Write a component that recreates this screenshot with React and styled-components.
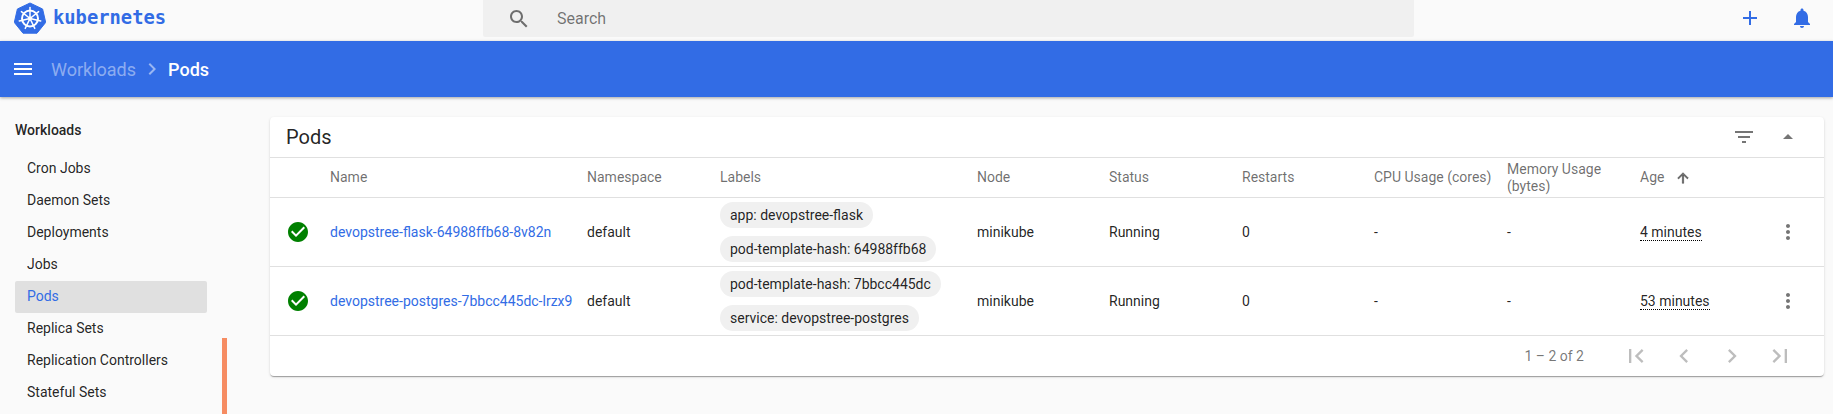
import React from "react";
import styled, { createGlobalStyle } from "styled-components";

const Global = createGlobalStyle`
  html, body { margin: 0; padding: 0; height: 100%; overflow: hidden; background: #fafafa; }
  body { font-family: Roboto, "Liberation Sans", sans-serif; font-size: 14px; color: rgba(0,0,0,.87); }
  * { box-sizing: border-box; }
`;

const P = {
  menu: "M3 18h18v-2H3v2zm0-5h18v-2H3v2zm0-7v2h18V6H3z",
  search: "M15.5 14h-.79l-.28-.27C15.41 12.59 16 11.11 16 9.5 16 5.91 13.09 3 9.5 3S3 5.91 3 9.5 5.91 16 9.5 16c1.61 0 3.09-.59 4.23-1.57l.27.28v.79l5 4.99L20.49 19l-4.99-5zm-6 0C7.01 14 5 11.99 5 9.5S7.01 5 9.5 5 14 7.01 14 9.5 11.99 14 9.5 14z",
  add: "M19 13h-6v6h-2v-6H5v-2h6V5h2v6h6v2z",
  bell: "M12 22c1.1 0 2-.9 2-2h-4c0 1.1.89 2 2 2zm6-6v-5c0-3.07-1.64-5.64-4.5-6.32V4c0-.83-.67-1.5-1.5-1.5s-1.5.67-1.5 1.5v.68C7.63 5.36 6 7.92 6 11v5l-2 2v1h16v-1l-2-2z",
  chevronRight: "M10 6L8.59 7.41 13.17 12l-4.58 4.59L10 18l6-6z",
  chevronLeft: "M15.41 7.41L14 6l-6 6 6 6 1.41-1.41L10.83 12z",
  first: "M18.41 16.59L13.82 12l4.59-4.59L17 6l-6 6 6 6zM6 6h2v12H6z",
  last: "M5.59 7.41L10.18 12l-4.59 4.59L7 18l6-6-6-6zM16 6h2v12h-2z",
  filter: "M10 18h4v-2h-4v2zM3 6v2h18V6H3zm3 7h12v-2H6v2z",
  dropUp: "M7 14l5-5 5 5z",
  up: "M4 12l1.41 1.41L11 7.83V20h2V7.83l5.58 5.59L20 12l-8-8-8 8z",
  check: "M12 2C6.48 2 2 6.48 2 12s4.48 10 10 10 10-4.48 10-10S17.52 2 12 2zm-2 15l-5-5 1.41-1.41L10 14.17l7.59-7.59L19 8l-9 9z",
  dots: "M12 8c1.1 0 2-.9 2-2s-.9-2-2-2-2 .9-2 2 .9 2 2 2zm0 2c-1.1 0-2 .9-2 2s.9 2 2 2 2-.9 2-2-.9-2-2-2zm0 6c-1.1 0-2 .9-2 2s.9 2 2 2 2-.9 2-2-.9-2-2-2z",
};

const IconSvg = styled.svg`
  display: block;
  flex: none;
  fill: ${(p) => p.$color || "rgba(0,0,0,.54)"};
  stroke: ${(p) => (p.$bold ? p.$color || "rgba(0,0,0,.54)" : "none")};
  stroke-width: ${(p) => (p.$bold ? 1 : 0)};
  paint-order: stroke;
`;
const Icon = ({ d, size = 24, color, bold }) => (
  <IconSvg viewBox="0 0 24 24" width={size} height={size} $color={color} $bold={bold}>
    <path d={d} />
  </IconSvg>
);

const Page = styled.div`
  height: 100vh;
  display: flex;
  flex-direction: column;
  overflow: hidden;
`;
const TopBar = styled.header`
  height: 41px;
  flex: none;
  display: flex;
  align-items: flex-start;
  background: #fafafa;
`;
const Brand = styled.div`
  width: 483px;
  flex: none;
  display: flex;
  align-items: center;
  gap: 7px;
  padding: 2px 0 0 14px;
`;
const BrandName = styled.span`
  font-family: "DejaVu Sans Mono", monospace;
  font-weight: 700;
  font-size: 18.8px;
  line-height: 30px;
  color: #326ce5;
`;
const SearchBox = styled.div`
  width: 931px;
  height: 37px;
  flex: none;
  display: flex;
  align-items: center;
  gap: 26px;
  padding: 0 0 0 24px;
  background: #f0f0f0;
  border-radius: 0 0 2px 2px;
`;
const SearchText = styled.span`
  font-size: 16px;
  color: rgba(0,0,0,.54);
`;
const TopActions = styled.div`
  margin-left: auto;
  display: flex;
  align-items: center;
  gap: 28px;
  padding: 6px 19px 0 0;
`;
const BlueBar = styled.div`
  height: 56px;
  flex: none;
  display: flex;
  align-items: center;
  padding-left: 11px;
  background: #326ce5;
  box-shadow: 0 1px 3px rgba(0,0,0,.35);
  position: relative;
  z-index: 1;
`;
const Crumbs = styled.nav`
  display: flex;
  align-items: center;
  margin-left: 16px;
  font-size: 18px;
  font-weight: 500;
`;
const CrumbLink = styled.span`
  font-weight: 400;
  color: rgba(255,255,255,.46);
`;
const CrumbCurrent = styled.span`
  color: #fff;
`;
const CrumbSep = styled.span`
  margin: 0 4px 0 4px;
`;
const Body = styled.div`
  flex: 1;
  min-height: 0;
  display: flex;
`;
const Sidebar = styled.aside`
  width: 222px;
  flex: none;
  padding: 24px 15px 0;
`;
const NavTitle = styled.div`
  height: 18px;
  line-height: 18px;
  margin-bottom: 14px;
  font-size: 14px;
  font-weight: 500;
`;
const NavItem = styled.div`
  height: 32px;
  line-height: 31px;
  padding-left: 12px;
  border-radius: 2px;
  font-size: 14px;
  color: ${(p) => (p.$active ? "#326ce5" : "rgba(0,0,0,.87)")};
  background: ${(p) => (p.$active ? "#e0e0e0" : "transparent")};
`;
const Thumb = styled.div`
  width: 5px;
  flex: none;
  margin-top: 241px;
  background: #f68c62;
`;
const Main = styled.main`
  flex: 1;
  min-width: 0;
  padding: 20px 9px 0 43px;
`;
const Card = styled.section`
  background: #fff;
  border-radius: 4px;
  box-shadow: 0 2px 1px -1px rgba(0,0,0,.2), 0 1px 1px rgba(0,0,0,.14), 0 1px 3px rgba(0,0,0,.12);
`;
const CardHead = styled.div`
  height: 41px;
  display: flex;
  align-items: center;
  padding: 0 24px 0 16px;
  border-bottom: 1px solid #e0e0e0;
`;
const CardTitle = styled.h2`
  margin: 0;
  font-size: 20px;
  font-weight: 400;
  line-height: 40px;
`;
const CardActions = styled.div`
  margin-left: auto;
  display: flex;
  align-items: center;
  gap: 20px;
`;
const columns = "60px 257px 133px 257px 132px 133px 132px 133px 133px 136px 24px";
const HeadRow = styled.div`
  display: grid;
  grid-template-columns: ${columns};
  height: 40px;
  align-items: center;
  border-bottom: 1px solid #e0e0e0;
`;
const HeadCell = styled.div`
  display: flex;
  align-items: center;
  gap: 11px;
  font-size: 14px;
  font-weight: 400;
  line-height: 17px;
  white-space: nowrap;
  color: rgba(0,0,0,.58);
  grid-column: ${(p) => p.$col || "auto"};
`;
const Row = styled.div`
  display: grid;
  grid-template-columns: ${columns};
  height: 69px;
  align-items: center;
  border-bottom: 1px solid #e0e0e0;
`;
const StatusCell = styled.div`
  padding-left: 16px;
`;
const PodLink = styled.a`
  color: #326ce5;
  white-space: nowrap;
`;
const Chips = styled.div`
  display: flex;
  flex-direction: column;
  align-items: flex-start;
  gap: 8px;
`;
const Chip = styled.span`
  height: 26px;
  line-height: 26px;
  padding: 0 10px;
  border-radius: 13px;
  background: #f0f0f0;
  white-space: nowrap;
`;
const Age = styled.span`
  border-bottom: 1px dotted #000;
  line-height: 15px;
  display: inline-block;
`;
const Footer = styled.div`
  height: 40px;
  display: flex;
  align-items: center;
  justify-content: flex-end;
  padding-right: 20px;
`;
const Range = styled.span`
  margin-right: 28px;
  font-size: 14px;
  color: rgba(0,0,0,.54);
`;
const PageButton = styled.span`
  width: 48px;
  display: flex;
  justify-content: center;
`;

const nav = ["Cron Jobs", "Daemon Sets", "Deployments", "Jobs", "Pods", "Replica Sets", "Replication Controllers", "Stateful Sets"];
const pods = [
  { name: "devopstree-flask-64988ffb68-8v82n", labels: ["app: devopstree-flask", "pod-template-hash: 64988ffb68"], age: "4 minutes" },
  { name: "devopstree-postgres-7bbcc445dc-lrzx9", labels: ["pod-template-hash: 7bbcc445dc", "service: devopstree-postgres"], age: "53 minutes" },
];
const heads = ["Namespace", "Labels", "Node", "Status", "Restarts", "CPU Usage (cores)"];

const Logo = () => (
  <svg width="32" height="32" viewBox="0 0 32 32">
    <path d="M16 1 L28.6 7 L31.7 20.4 L23 31.2 L9 31.2 L.3 20.4 L3.4 7 Z" fill="#326ce5" stroke="#326ce5" strokeLinejoin="round" strokeWidth="1" />
    <g stroke="#fff" fill="none" strokeLinecap="round">
      <circle cx="16" cy="16.5" r="8" strokeWidth="2" />
      <circle cx="16" cy="16.5" r="1.6" fill="#fff" strokeWidth="1" />
      <g strokeWidth="1.5">
        <path d="M16 16.5V5.5" />
        <path d="M16 16.5V5.5" transform="rotate(51.4 16 16.5)" />
        <path d="M16 16.5V5.5" transform="rotate(102.9 16 16.5)" />
        <path d="M16 16.5V5.5" transform="rotate(154.3 16 16.5)" />
        <path d="M16 16.5V5.5" transform="rotate(205.7 16 16.5)" />
        <path d="M16 16.5V5.5" transform="rotate(257.1 16 16.5)" />
        <path d="M16 16.5V5.5" transform="rotate(308.6 16 16.5)" />
      </g>
    </g>
  </svg>
);

export default function App() {
  return (
    <Page>
      <Global />
      <TopBar>
        <Brand>
          <Logo />
          <BrandName>kubernetes</BrandName>
        </Brand>
        <SearchBox>
          <Icon d={P.search} />
          <SearchText>Search</SearchText>
        </SearchBox>
        <TopActions>
          <Icon d={P.add} color="#326ce5" />
          <Icon d={P.bell} color="#326ce5" />
        </TopActions>
      </TopBar>
      <BlueBar>
        <Icon d={P.menu} color="#fff" />
        <Crumbs>
          <CrumbLink>Workloads</CrumbLink>
          <CrumbSep><Icon d={P.chevronRight} color="rgba(255,255,255,.5)" /></CrumbSep>
          <CrumbCurrent>Pods</CrumbCurrent>
        </Crumbs>
      </BlueBar>
      <Body>
        <Sidebar>
          <NavTitle>Workloads</NavTitle>
          {nav.map((n) => (
            <NavItem key={n} $active={n === "Pods"}>{n}</NavItem>
          ))}
        </Sidebar>
        <Thumb />
        <Main>
          <Card>
            <CardHead>
              <CardTitle>Pods</CardTitle>
              <CardActions>
                <Icon d={P.filter} />
                <Icon d={P.dropUp} />
              </CardActions>
            </CardHead>
            <HeadRow>
              <HeadCell $col="2">Name</HeadCell>
              {heads.map((h) => <HeadCell key={h}>{h}</HeadCell>)}
              <HeadCell>Memory Usage<br />(bytes)</HeadCell>
              <HeadCell>Age <Icon d={P.up} size={16} bold /></HeadCell>
            </HeadRow>
            {pods.map((p) => (
              <Row key={p.name}>
                <StatusCell><Icon d={P.check} color="#008000" /></StatusCell>
                <PodLink>{p.name}</PodLink>
                <div>default</div>
                <Chips>{p.labels.map((l) => <Chip key={l}>{l}</Chip>)}</Chips>
                <div>minikube</div>
                <div>Running</div>
                <div>0</div>
                <div>-</div>
                <div>-</div>
                <div><Age>{p.age}</Age></div>
                <Icon d={P.dots} />
              </Row>
            ))}
            <Footer>
              <Range>1 – 2 of 2</Range>
              <PageButton><Icon d={P.first} size={28} color="rgba(0,0,0,.26)" /></PageButton>
              <PageButton><Icon d={P.chevronLeft} size={28} color="rgba(0,0,0,.26)" /></PageButton>
              <PageButton><Icon d={P.chevronRight} size={28} color="rgba(0,0,0,.26)" /></PageButton>
              <PageButton><Icon d={P.last} size={28} color="rgba(0,0,0,.26)" /></PageButton>
            </Footer>
          </Card>
        </Main>
      </Body>
    </Page>
  );
}
